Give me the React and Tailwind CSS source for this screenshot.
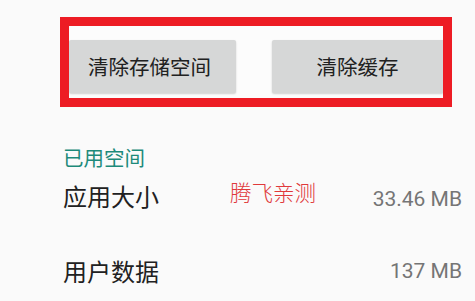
export default function App() {
  return (
    <div className="w-[475px] h-[301px] bg-[#fafafa] overflow-hidden font-['Noto_Sans_CJK_SC','Noto_Sans',sans-serif]">
      {/* highlighted button area */}
      <div className="ml-[60px] mt-[17px] w-[392px] h-[90px] border-[9px] border-[#ed1c24] bg-[#fcfcfc] overflow-hidden">
        <div className="flex gap-[36px] pt-[14px]">
          <button className="shrink-0 w-[167px] h-[53px] rounded-[2px] bg-[#d6d7d7] shadow-[0_1px_2px_rgba(0,0,0,0.18)] text-[20.5px] leading-none text-[#212121] pr-[6px]">
            清除存储空间
          </button>
          <button className="shrink-0 w-[171px] h-[53px] rounded-l-[2px] bg-[#d6d7d7] shadow-[0_1px_2px_rgba(0,0,0,0.18)] text-[20.5px] leading-none text-[#212121]">
            清除缓存
          </button>
        </div>
      </div>

      <div className="pl-[63px] pr-[13px]">
        <div className="mt-[40px] text-[20.5px] leading-[20px] text-[#1d8a7a]">已用空间</div>

        <div className="relative mt-[4px] h-[50px] flex items-center justify-between">
          <span className="text-[24px] leading-none text-[#212121]">应用大小</span>
          <span className="absolute left-[167px] top-[10px] text-[21.5px] leading-none font-light text-[#e0393b]">腾飞亲测</span>
          <span className="mt-[6px] text-[21px] leading-none text-[#757575] font-['Roboto','Liberation_Sans',sans-serif]">
            33.46 MB
          </span>
        </div>

        <div className="mt-[25px] h-[50px] flex items-center justify-between">
          <span className="text-[24px] leading-none text-[#212121]">用户数据</span>
          <span className="text-[21px] leading-none text-[#757575] font-['Roboto','Liberation_Sans',sans-serif]">
            137 MB
          </span>
        </div>
      </div>
    </div>
  );
}
